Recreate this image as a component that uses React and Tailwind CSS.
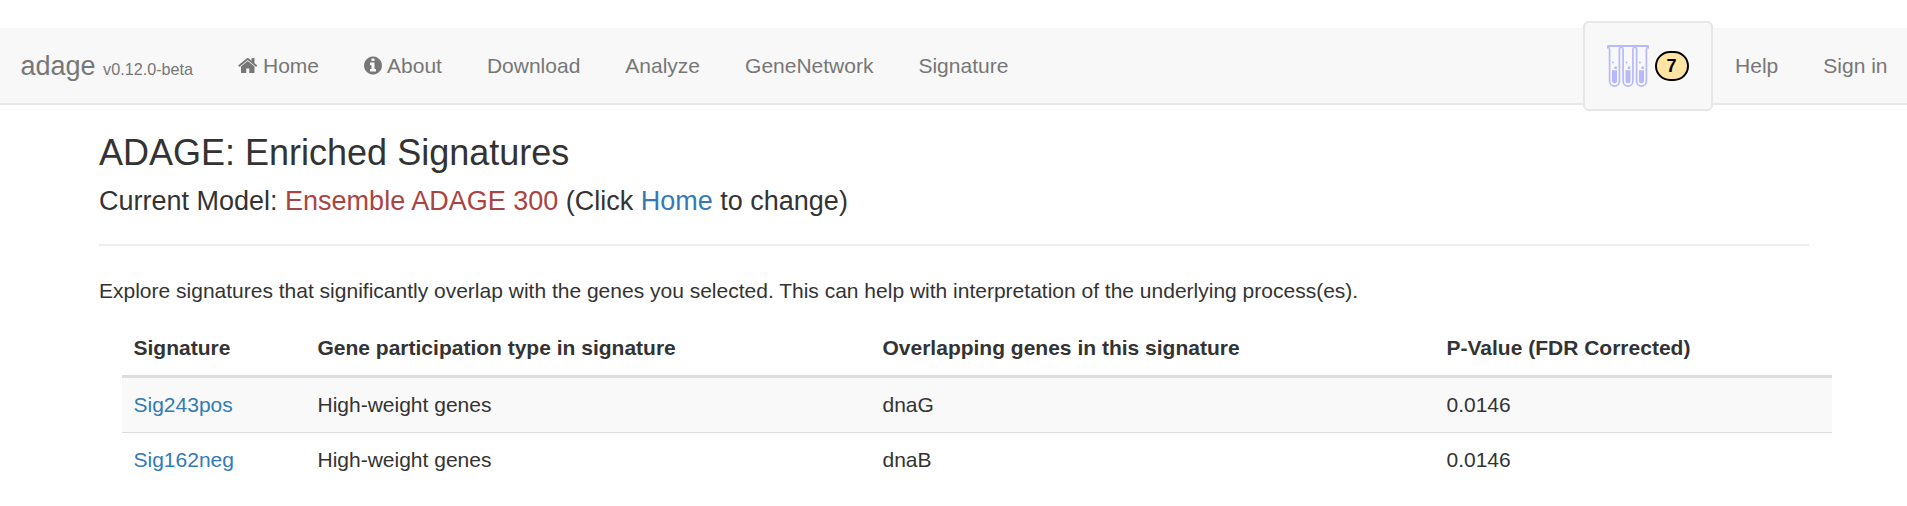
const HomeIcon = () => (
  <svg className="mr-[6px] mt-[4px] h-[21px] w-[19.5px] shrink-0" viewBox="64 0 1664 1792" fill="currentColor">
    <path d="M1472 992v480q0 26-19 45t-45 19h-384v-384h-256v384h-384q-26 0-45-19t-19-45v-480q0-1 .5-3t.5-3l575-474 575 474q1 2 1 6zm223-69l-62 74q-8 9-21 11h-3q-13 0-21-7l-692-577-692 577q-12 8-24 7-13-2-21-11l-62-74q-8-10-7-23.5t11-21.5l719-599q32-26 76-26t76 26l244 204v-195q0-14 9-23t23-9h192q14 0 23 9t9 23v408l219 182q10 8 11 21.5t-7 23.5z" />
  </svg>
);

const InfoIcon = () => (
  <svg className="mr-[5px] mt-[4px] h-[21px] w-[18px] shrink-0" viewBox="128 0 1536 1792" fill="currentColor">
    <path d="M1152 1376v-160q0-14-9-23t-23-9h-96v-512q0-14-9-23t-23-9h-320q-14 0-23 9t-9 23v160q0 14 9 23t23 9h96v320h-96q-14 0-23 9t-9 23v160q0 14 9 23t23 9h448q14 0 23-9t9-23zm-128-896v-160q0-14-9-23t-23-9h-192q-14 0-23 9t-9 23v160q0 14 9 23t23 9h192q14 0 23-9t9-23zm640 416q0 209-103 385.5t-279.5 279.5-385.5 103-385.5-103-279.5-279.5-103-385.5 103-385.5 279.5-279.5 385.5-103 385.5 103 279.5 279.5 103 385.5z" />
  </svg>
);

const TubesIcon = () => (
  <svg className="h-[42px] w-[42px] shrink-0" viewBox="0 0 42 42" fill="none" stroke="#b8b8ff" strokeWidth="1.7">
    <path d="M1 3.200C.2 1.600.8 1 2 1H40c1.200 0 1.800.6 1 2.200" strokeWidth="2" />
    {[0, 13.5, 27].map((x) => (
      <g key={x} transform={`translate(${x} 0)`}>
        <path d="M.8 2C2 2.300 2.600 3 2.600 4.500V36.200a4.900 4.900 0 0 0 9.800 0V4.500C12.400 3 13 2.300 14.200 2" />
        <path d="M5 25.300h5V35.800a2.500 2.500 0 0 1-5 0z" fill="#b8b8ff" stroke="none" />
        <rect x="7.200" y="21.500" width="2.800" height="2.600" rx="1" fill="#b8b8ff" stroke="none" />
        <rect x="5" y="16.600" width="1.800" height="1.800" rx=".6" fill="#b8b8ff" stroke="none" />
      </g>
    ))}
  </svg>
);

const NavItem = ({ icon, children }) => (
  <a href="#" className="flex px-[22.5px] text-[21px] leading-[30px]">
    {icon}
    <span>{children}</span>
  </a>
);

const rows = [
  { sig: "Sig243pos", type: "High-weight genes", genes: "dnaG", p: "0.0146" },
  { sig: "Sig162neg", type: "High-weight genes", genes: "dnaB", p: "0.0146" },
];

export default function App() {
  return (
    <div className="h-[506px] overflow-hidden bg-white pt-[28px] font-['Liberation_Sans',Arial,sans-serif] text-[21px] leading-[30px] text-[#333]">
      <nav className="flex h-[77px] items-start justify-between border-b-2 border-[#e7e7e7] bg-[#f8f8f8] pl-[20.5px] text-[#777]">
        <div className="flex h-[76px] items-center">
          <a href="#" className="mr-[21.5px] w-[173px] whitespace-nowrap text-[27px] leading-[30px]">
            adage <span className="text-[16.2px] leading-none">v0.12.0-beta</span>
          </a>
          <NavItem icon={<HomeIcon />}>Home</NavItem>
          <NavItem icon={<InfoIcon />}>About</NavItem>
          <NavItem>Download</NavItem>
          <NavItem>Analyze</NavItem>
          <NavItem>GeneNetwork</NavItem>
          <NavItem>Signature</NavItem>
        </div>
        <div className="-mr-[3px] flex h-[76px] items-center">
          <button className="-my-[8px] flex h-[90px] w-[130px] items-center rounded-[6px] border-2 border-[#e7e7e7] bg-[#f8f8f8] pl-[22px]">
            <TubesIcon />
            <span className="ml-[6px] flex h-[30px] w-[34px] items-center justify-center rounded-[15px] border-2 border-black bg-[#ffe4a3] text-[18px] font-bold leading-[18px] text-black">
              7
            </span>
          </button>
          <NavItem>Help</NavItem>
          <NavItem>Sign in</NavItem>
        </div>
      </nav>
      <main className="pl-[99px] pr-[75px] pt-[27px]">
        <div className="mr-[23px] border-b-2 border-[#eee] pb-[28px]">
          <h2 className="text-[36px] leading-[42px]">ADAGE: Enriched Signatures</h2>
          <h3 className="mt-[12px] text-[27px] leading-[30px]">
            Current Model: <span className="text-[#a94442]">Ensemble ADAGE 300</span> (Click{" "}
            <a href="#" className="text-[#337ab7]">Home</a> to change)
          </h3>
        </div>
        <p className="mt-[30px]">
          Explore signatures that significantly overlap with the genes you selected. This can help with interpretation of the underlying process(es).
        </p>
        <table className="ml-[22.5px] mt-[15px] w-[1710px] table-fixed border-separate border-spacing-0 text-left">
          <colgroup>
            <col className="w-[184px]" />
            <col className="w-[565px]" />
            <col className="w-[564px]" />
            <col />
          </colgroup>
          <thead>
            <tr>
              {["Signature", "Gene participation type in signature", "Overlapping genes in this signature", "P-Value (FDR Corrected)"].map((h) => (
                <th key={h} className="border-b-[3px] border-[#ddd] p-[12px] font-bold">{h}</th>
              ))}
            </tr>
          </thead>
          <tbody>
            {rows.map((r) => (
              <tr key={r.sig} className="group odd:bg-[#f9f9f9]">
                <td className="p-[12px] group-even:border-t group-even:border-[#ddd]">
                  <a href="#" className="text-[#337ab7]">{r.sig}</a>
                </td>
                <td className="p-[12px] group-even:border-t group-even:border-[#ddd]">{r.type}</td>
                <td className="p-[12px] group-even:border-t group-even:border-[#ddd]">{r.genes}</td>
                <td className="p-[12px] group-even:border-t group-even:border-[#ddd]">{r.p}</td>
              </tr>
            ))}
          </tbody>
        </table>
      </main>
    </div>
  );
}
